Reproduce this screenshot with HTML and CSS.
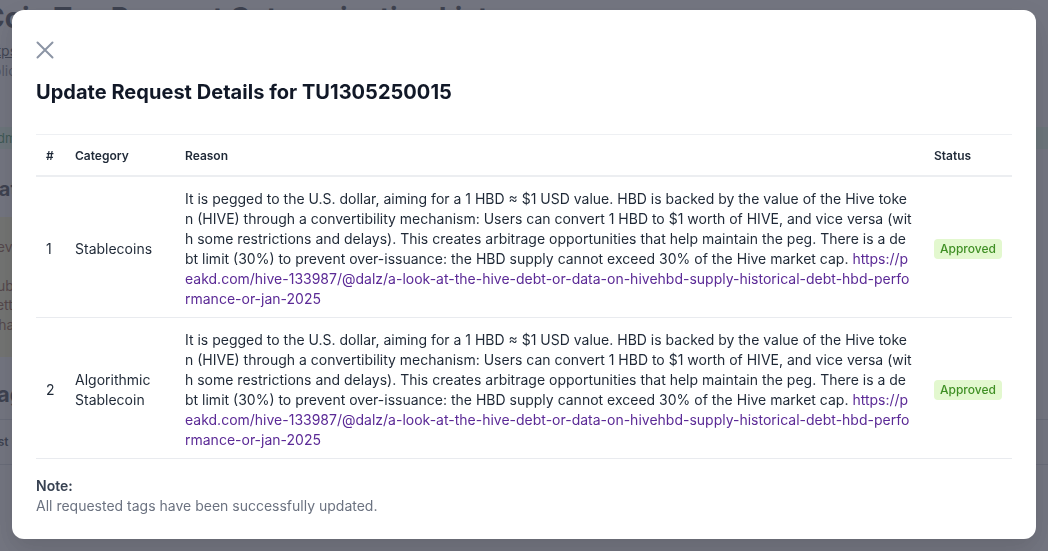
FILE: index.html
```html
<!DOCTYPE html>
<html lang="en">
<head>
<meta charset="utf-8">
<title>Update Request Details</title>
<link rel="stylesheet" href="styles.css">
</head>
<body>
<div class="page">
  <h1 class="page-title">Coin Tag Request Categorization List</h1>
  <div class="page-inner">
    <a class="page-link" href="#">https://peakd.com/hive-133987/@dalz</a>
    <p class="page-sub">Solicitud de categorización</p>
    <div class="page-green">Admin, approved</div>
    <h2 class="page-h2">Categories</h2>
    <div class="banners">
      <div class="banner banner-warn">
        <p>Reviewer comments</p>
        <p>Submitted by the user</p>
        <p>Letter of request</p>
        <p>Changes pending</p>
      </div>
      <div class="banner banner-pink">
        <p>Go to the request</p>
        <p>Note</p>
        <p>-</p>
      </div>
    </div>
    <h2 class="page-h3">Tag history</h2>
    <div class="page-row">Last Updated</div>
  </div>
</div>

<div class="overlay">
  <div class="modal" role="dialog">
    <button class="close" type="button" aria-label="Close">
      <svg width="18" height="18" viewBox="0 0 18 18" fill="none" stroke="#8c95a5" stroke-width="2" stroke-linecap="round"><path d="M1.5 1.5L16.5 16.5M16.5 1.5L1.5 16.5"/></svg>
    </button>
    <h2 class="modal-title">Update Request Details for TU1305250015</h2>
    <table class="details">
      <thead>
        <tr>
          <th class="c-num">#</th>
          <th class="c-cat">Category</th>
          <th class="c-reason">Reason</th>
          <th class="c-status">Status</th>
        </tr>
      </thead>
      <tbody>
        <tr>
          <td class="c-num">1</td>
          <td class="c-cat">Stablecoins</td>
          <td class="c-reason">It is pegged to the U.S. dollar, aiming for a 1 HBD ≈ $1 USD value. HBD is backed by the value of the Hive token (HIVE) through a convertibility mechanism: Users can convert 1 HBD to $1 worth of HIVE, and vice versa (with some restrictions and delays). This creates arbitrage opportunities that help maintain the peg. There is a debt limit (30%) to prevent over-issuance: the HBD supply cannot exceed 30% of the Hive market cap. <a href="#">https://peakd.com/hive-133987/@dalz/a-look-at-the-hive-debt-or-data-on-hivehbd-supply-historical-debt-hbd-performance-or-jan-2025</a></td>
          <td class="c-status"><span class="badge">Approved</span></td>
        </tr>
        <tr>
          <td class="c-num">2</td>
          <td class="c-cat">Algorithmic Stablecoin</td>
          <td class="c-reason">It is pegged to the U.S. dollar, aiming for a 1 HBD ≈ $1 USD value. HBD is backed by the value of the Hive token (HIVE) through a convertibility mechanism: Users can convert 1 HBD to $1 worth of HIVE, and vice versa (with some restrictions and delays). This creates arbitrage opportunities that help maintain the peg. There is a debt limit (30%) to prevent over-issuance: the HBD supply cannot exceed 30% of the Hive market cap. <a href="#">https://peakd.com/hive-133987/@dalz/a-look-at-the-hive-debt-or-data-on-hivehbd-supply-historical-debt-hbd-performance-or-jan-2025</a></td>
          <td class="c-status"><span class="badge">Approved</span></td>
        </tr>
      </tbody>
    </table>
    <div class="note">
      <div class="note-label">Note:</div>
      <div class="note-text">All requested tags have been successfully updated.</div>
    </div>
  </div>
</div>
</body>
</html>
```

FILE: styles.css
```css
* { box-sizing: border-box; }
html, body { margin: 0; padding: 0; }
body {
  font-family: Inter, "Noto Sans", "Liberation Sans", sans-serif;
  background: #ffffff;
  color: #1f2937;
  width: 1048px;
  height: 551px;
  overflow: hidden;
}

/* background page */
.page {
  margin-left: -16px;
  width: 1100px;
}
.page-title {
  margin: 0;
  font-size: 28px;
  line-height: 28px;
  font-weight: 700;
  color: #111827;
  padding-top: 4px;
}
.page-inner { padding-top: 9px; }
.page-link {
  display: block;
  font-size: 14px;
  line-height: 20px;
  color: #1f2937;
  text-decoration: underline;
}
.page-sub {
  margin: 0;
  font-size: 14px;
  line-height: 20px;
  color: #6b7280;
}
.page-green {
  margin-top: 46px;
  height: 22px;
  background: #dcfce7;
  color: #15803d;
  font-size: 13px;
  line-height: 22px;
  padding-left: 4px;
}
.page-h2 {
  margin: 26px 0 0;
  font-size: 20px;
  line-height: 28px;
  font-weight: 700;
  color: #111827;
}
.banners {
  display: flex;
  justify-content: space-between;
  margin-top: 14px;
}
.banner {
  height: 140px;
  width: 300px;
  padding: 20px 0 0 4px;
  font-size: 14px;
  line-height: 19.5px;
}
.banner p { margin: 0; }
.banner p:first-child { margin-bottom: 19px; }
.banner-warn { background: #fef9c3; color: #78350f; }
.banner-pink { background: #fce7f3; color: #831843; width: 90px; padding-left: 10px; margin-right: 52px; }
.page-h3 {
  margin: 22px 0 0;
  font-size: 22px;
  line-height: 30px;
  font-weight: 700;
  color: #111827;
  border-bottom: 1px solid #d1d5db;
  padding-bottom: 10px;
}
.page-row {
  font-size: 12px;
  font-weight: 600;
  line-height: 44px;
  border-bottom: 1px solid #d1d5db;
  color: #111827;
}

/* overlay + modal */
.overlay {
  position: fixed;
  inset: 0;
  background: rgba(75, 78, 92, 0.78);
  display: flex;
  align-items: flex-start;
  justify-content: flex-start;
  padding: 10px 12px 12px 12px;
}
.modal {
  width: 1024px;
  height: 529px;
  background: #ffffff;
  border-radius: 12px;
  padding: 31px 24px 23px 24px;
  box-shadow: 0 10px 25px rgba(0, 0, 0, 0.12);
}
.close {
  display: block;
  border: 0;
  background: none;
  padding: 0;
  margin: 0;
  width: 18px;
  height: 18px;
  cursor: pointer;
}
.close svg { display: block; }
.modal-title {
  margin: 19px 0 0;
  font-size: 20px;
  line-height: 28px;
  font-weight: 700;
  color: #111827;
  letter-spacing: 0.03px;
}

.details {
  width: 100%;
  margin-top: 28px;
  border-collapse: collapse;
  table-layout: fixed;
}
.details th, .details td {
  text-align: left;
  vertical-align: middle;
  padding: 0 10px;
}
.details thead tr {
  border-top: 1px solid #eef0f3;
  border-bottom: 2px solid #eceef1;
}
.details th {
  height: 41px;
  padding-top: 3px;
  font-size: 12px;
  line-height: 16px;
  font-weight: 600;
  color: #1f2937;
}
.details tbody tr { border-bottom: 1px solid #e9ebef; }
.details td {
  font-size: 14px;
  line-height: 20px;
  color: #1f2937;
  padding-top: 12px;
  padding-bottom: 8px;
}
.c-num { width: 29px; }
.c-cat { width: 110px; }
.c-status { width: 88px; }
.details td.c-reason {
  word-break: break-all;
  color: #1f2937;
}
.c-reason a {
  color: #5b2a96;
  text-decoration: none;
}
.badge {
  display: inline-block;
  background: #e3f8cf;
  color: #3f8f24;
  font-size: 12px;
  line-height: 16px;
  font-weight: 500;
  padding: 2px 6px;
  border-radius: 4px;
}

.note { margin-top: 17px; }
.note-label {
  font-size: 14px;
  line-height: 20px;
  font-weight: 600;
  color: #374151;
}
.note-text {
  font-size: 14px;
  line-height: 20px;
  color: #6b7280;
}
```
